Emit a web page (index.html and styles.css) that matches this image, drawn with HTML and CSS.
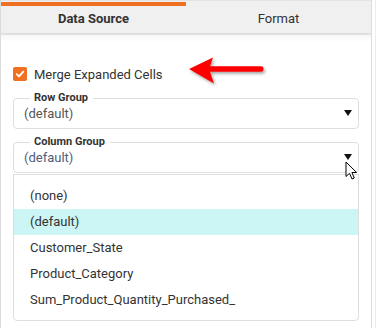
FILE: index.html
```html
<!DOCTYPE html>
<html>
<head>
<meta charset="utf-8">
<link rel="stylesheet" href="styles.css">
</head>
<body>
<div class="panel">
  <div class="tabs">
    <div class="tab active">Data Source</div>
    <div class="tab">Format</div>
  </div>
  <div class="content">
    <div class="check-row">
      <span class="checkbox">
        <svg width="10" height="10" viewBox="0 0 10 10"><path d="M1.8 5.2 L4 7.4 L8.3 2.6" fill="none" stroke="#fff" stroke-width="1.8" stroke-linecap="round" stroke-linejoin="round"/></svg>
      </span>
      <span class="check-label">Merge Expanded Cells</span>
      <svg class="annot-arrow" width="84" height="34" viewBox="0 0 84 34">
        <defs>
          <filter id="sh" x="-20%" y="-30%" width="150%" height="170%">
            <feDropShadow dx="1.5" dy="2" stdDeviation="1.5" flood-color="#000" flood-opacity="0.35"/>
          </filter>
        </defs>
        <path d="M2 13 L26 1.5 L23 10.3 L74 10.3 Q76.5 10.3 76.5 13 Q76.5 15.7 74 15.7 L23 15.7 L27 27.5 Z" fill="#f00" filter="url(#sh)"/>
      </svg>
    </div>
    <fieldset class="group">
      <legend>Row Group</legend>
      <div class="select-row"><span class="value">(default)</span><span class="caret"></span></div>
    </fieldset>
    <fieldset class="group group2">
      <legend>Column Group</legend>
      <div class="select-row"><span class="value blue">(default)</span><span class="caret"></span></div>
      <svg class="cursor" width="14" height="20" viewBox="0 0 14 20"><path d="M1 1 L1 15.5 L4.5 12.3 L7 18 L9.3 17 L6.9 11.5 L11.6 11.5 Z" fill="#fff" stroke="#000" stroke-width="1" stroke-linejoin="round"/></svg>
    </fieldset>
    <ul class="list">
      <li>(none)</li>
      <li class="sel">(default)</li>
      <li>Customer_State</li>
      <li>Product_Category</li>
      <li>Sum_Product_Quantity_Purchased_</li>
    </ul>
  </div>
</div>
</body>
</html>
```
FILE: styles.css
```css
html, body {
  margin: 0;
  padding: 0;
  background: #fff;
}
body {
  font-family: Roboto, "Liberation Sans", sans-serif;
  color: #333;
  width: 377px;
  height: 328px;
  overflow: hidden;
  position: relative;
}
body::after {
  content: "";
  position: absolute;
  top: 0;
  right: 1px;
  width: 1px;
  height: 328px;
  background: #ececec;
}
.panel {
  width: 370px;
  height: 328px;
  border-left: 1px solid #dcdcdc;
  border-right: 1px solid #dcdcdc;
  box-sizing: content-box;
}
.tabs {
  display: flex;
  height: 32px;
  background: #f0f0f0;
  border-top: 1px solid #e4e4e4;
  border-bottom: 2px solid #e0e0e0;
}
.tab {
  flex: 1;
  display: flex;
  align-items: center;
  justify-content: center;
  font-size: 13px;
  color: #333;
  padding-top: 3px;
  box-sizing: border-box;
}
.tab.active {
  font-weight: bold;
  position: relative;
}
.tab.active::before {
  content: "";
  position: absolute;
  left: 0;
  right: 0;
  top: 1px;
  height: 4px;
  background: #ef7022;
}
.content {
  padding: 32px 12px 0 12px;
  background: linear-gradient(#f7f7f7, #fff 7px);
  height: 293px;
  box-sizing: border-box;
}
.check-row {
  display: flex;
  align-items: center;
  height: 14px;
  position: relative;
}
.checkbox {
  width: 14px;
  height: 14px;
  border-radius: 2px;
  background: #ef7022;
  display: flex;
  align-items: center;
  justify-content: center;
  margin-right: 7px;
}
.check-label {
  font-size: 13px;
  color: #333;
}
.annot-arrow {
  position: absolute;
  left: 174px;
  top: -11px;
}
.group {
  margin: 11px 0 0 0;
  width: 346px;
  box-sizing: border-box;
  border: 1px solid #dedede;
  border-radius: 4px;
  padding: 0 6px 5px 10px;
  position: relative;
}
.group2 {
  margin-top: 7px;
}
.group legend {
  font-size: 11px;
  font-weight: bold;
  color: #333;
  margin-left: 6px;
  padding: 0 5px 0 4px;
  line-height: 12px;
}
.select-row {
  display: flex;
  align-items: center;
  justify-content: space-between;
  height: 20px;
  margin-top: -1px;
}
.value {
  font-size: 13px;
  color: #555;
}
.value.blue {
  color: #4f5d7a;
}
.caret {
  width: 0;
  height: 0;
  border-left: 4px solid transparent;
  border-right: 4px solid transparent;
  border-top: 6px solid #111;
  margin-right: 0px;
}
.cursor {
  position: absolute;
  right: -1px;
  top: 13px;
}
.list {
  list-style: none;
  margin: 1px 0 0 0;
  padding: 8px 0 7px 0;
  width: 346px;
  box-sizing: border-box;
  border: 1px solid #dedede;
  border-radius: 0 0 4px 4px;
  background: #fff;
}
.list li {
  height: 26px;
  line-height: 26px;
  padding-left: 16px;
  font-size: 13px;
  color: #333;
}
.list li.sel {
  background: #ccf5f5;
}
```
